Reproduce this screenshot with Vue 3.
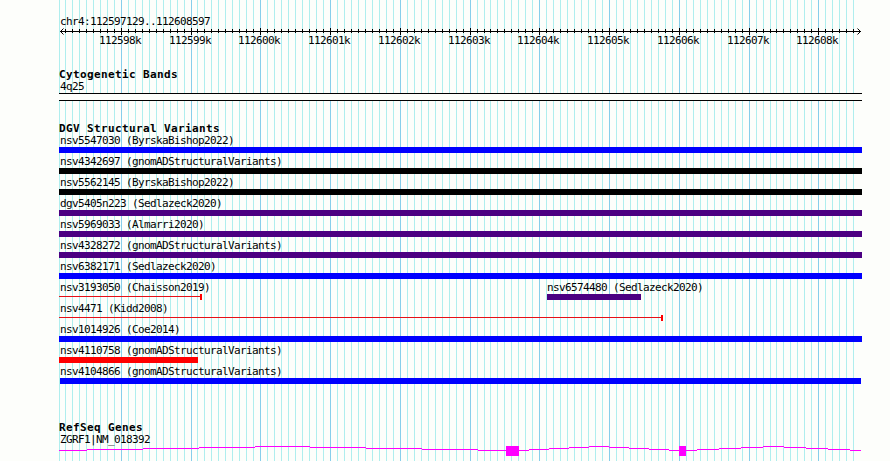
<template>
  <div class="browser">
    <svg class="grid" width="890" height="461" shape-rendering="crispEdges">
      <rect class="minor" x="59" y="0" width="1" height="461" />
      <rect
        v-for="line in gridLines"
        :key="line.pos"
        :class="line.major ? 'major' : 'minor'"
        :x="line.x"
        y="0"
        width="1"
        height="461"
      />
    </svg>

    <div class="tracks">
      <header class="region">
        <div class="label">chr4:112597129..112608597</div>
        <svg class="ruler" width="803" height="39">
          <g shape-rendering="crispEdges">
            <rect x="1" y="3" width="801" height="1" />
            <rect
              v-for="line in gridLines"
              :key="line.pos"
              :x="line.x - LEFT"
              :y="line.major ? 0 : 1"
              width="1"
              :height="line.major ? 7 : 4"
            />
          </g>
          <path class="arrow" d="M4.5 0.5L1.5 3.5L4.5 6.5M798.5 0.5L801.5 3.5L798.5 6.5" />
          <text
            v-for="line in majorLines"
            :key="line.pos"
            :x="line.x - LEFT - 22"
            y="16"
          >{{ line.pos / 1000 }}k</text>
        </svg>
      </header>

      <section class="track cytobands">
        <h3 class="title">Cytogenetic Bands</h3>
        <div class="label">4q25</div>
        <div class="band"></div>
      </section>

      <section class="track variants">
        <h3 class="title">DGV Structural Variants</h3>
        <div v-for="(row, i) in rows" :key="i" class="row">
          <div
            v-for="v in row"
            :key="v.name"
            class="variant"
            :style="{ marginLeft: v.start - LEFT + 'px', width: v.end - v.start + 'px' }"
          >
            <div class="label">{{ v.name }}</div>
            <div :class="['glyph', v.type]"></div>
          </div>
        </div>
      </section>

      <section class="track genes">
        <h3 class="title">RefSeq Genes</h3>
        <div class="label">ZGRF1|NM_018392</div>
        <svg class="gene" width="803" height="15" shape-rendering="crispEdges">
          <rect
            v-for="step in intronSteps"
            :key="step.x"
            :x="step.x"
            :y="step.y"
            :width="step.width"
            height="1"
          />
          <rect x="447" y="0" width="13" height="10" />
          <rect x="620" y="0" width="7" height="10" />
        </svg>
      </section>
    </div>
  </div>
</template>

<script setup>
const LEFT = 59
const REGION_START = 112597129
const REGION_END = 112608597
const SCALE = 800 / (REGION_END - REGION_START)

// one line every 100 bp, a major one every 1000 bp
const gridLines = []
for (let pos = 112597200; pos <= 112608500; pos += 100) {
  gridLines.push({
    pos,
    x: Math.round(60 + (pos - REGION_START) * SCALE),
    major: pos % 1000 === 0
  })
}
const majorLines = gridLines.filter((line) => line.major)

const rows = [
  [{ name: 'nsv5547030 (ByrskaBishop2022)', type: 'gain', start: 59, end: 862 }],
  [{ name: 'nsv4342697 (gnomADStructuralVariants)', type: 'complex', start: 59, end: 862 }],
  [{ name: 'nsv5562145 (ByrskaBishop2022)', type: 'complex', start: 59, end: 862 }],
  [{ name: 'dgv5405n223 (Sedlazeck2020)', type: 'inversion', start: 59, end: 862 }],
  [{ name: 'nsv5969033 (Almarri2020)', type: 'inversion', start: 59, end: 862 }],
  [{ name: 'nsv4328272 (gnomADStructuralVariants)', type: 'inversion', start: 59, end: 862 }],
  [{ name: 'nsv6382171 (Sedlazeck2020)', type: 'gain', start: 59, end: 862 }],
  [
    { name: 'nsv3193050 (Chaisson2019)', type: 'span', start: 59, end: 202 },
    { name: 'nsv6574480 (Sedlazeck2020)', type: 'inversion', start: 547, end: 641 }
  ],
  [{ name: 'nsv4471 (Kidd2008)', type: 'span', start: 59, end: 663 }],
  [{ name: 'nsv1014926 (Coe2014)', type: 'gain', start: 59, end: 862 }],
  [{ name: 'nsv4110758 (gnomADStructuralVariants)', type: 'loss', start: 59, end: 198 }],
  [{ name: 'nsv4104866 (gnomADStructuralVariants)', type: 'gain', start: 60, end: 861 }]
]

// introns rise 4px to the middle and come back down
const introns = [
  [59, 506],
  [519, 679],
  [686, 861]
]
const intronSteps = introns.flatMap(([start, end]) => {
  const size = (end - start) / 8
  return Array.from({ length: 9 }, (_, i) => {
    const from = Math.round(Math.max(start, start + (i - 0.5) * size))
    const to = Math.round(Math.min(end, start + (i + 0.5) * size))
    return { x: from - LEFT, y: 4 - Math.min(i, 8 - i), width: to - from }
  })
})
</script>

<style>
body {
  margin: 0;
  background: #fdfefb;
}
</style>

<style scoped>
.browser {
  position: relative;
  width: 890px;
  height: 461px;
  overflow: hidden;
  background: #fdfefb;
  color: #000;
  font-family: 'DejaVu Sans Mono', monospace;
  font-size: 11px;
  letter-spacing: -0.622px;
}

.grid {
  position: absolute;
  top: 0;
  left: 0;
}

.minor { fill: #afeeee; }
.major { fill: #87ceeb; }

.tracks {
  position: relative;
  width: 803px;
  padding: 15px 0 0 59px;
}

.label {
  height: 13px;
  padding-left: 1px;
  line-height: 13px;
  white-space: nowrap;
}

.title {
  height: 13px;
  margin: 0;
  font-size: 11px;
  font-weight: bold;
  line-height: 15px;
  letter-spacing: 0.378px;
  white-space: nowrap;
}

.ruler {
  display: block;
}

.arrow {
  fill: none;
  stroke: #000;
  stroke-width: 1;
}

.band {
  box-sizing: border-box;
  height: 8px;
  border-top: 1px solid #000;
  border-bottom: 1px solid #000;
  background: #fdfefb;
}

.cytobands { margin-bottom: 20px; }
.variants { margin-bottom: 34px; }

.row {
  display: grid;
  height: 21px;
}

.variant {
  grid-area: 1 / 1;
}

.variant .label { width: 0; }
.row:last-child .label { padding-left: 0; }
.variant + .variant .label { padding-left: 0; }

.glyph { height: 6px; }
.gain { background: #0000ff; }
.loss { background: #ff0000; }
.complex { background: #000; }
.inversion { background: #4b0082; }

.span {
  box-sizing: border-box;
  border-right: 2px solid #ff0000;
  background: linear-gradient(#e60f17, #e60f17) 0 2px / 100% 1px no-repeat;
}

.gene {
  display: block;
  fill: #ff00ff;
}
</style>
